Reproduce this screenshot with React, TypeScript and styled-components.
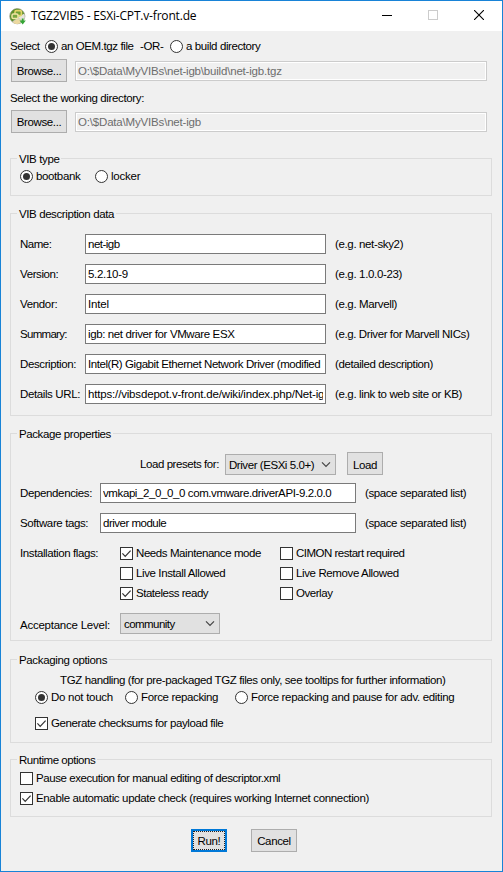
import React from 'react'
import styled, { createGlobalStyle } from 'styled-components'

const GlobalStyle = createGlobalStyle`
  * {
    box-sizing: border-box;
  }

  body {
    margin: 0;
    background: #f0f0f0;
    color: #000;
    font-family: 'Liberation Sans', Arial, sans-serif;
    font-size: 11.5px;
    line-height: 14px;
    letter-spacing: -0.36px;
  }

  button, input {
    font: inherit;
    color: inherit;
    letter-spacing: inherit;
  }
`

const Window = styled.div`
  display: flex;
  flex-direction: column;
  width: 503px;
  height: 872px;
  border: 1px solid #1883d7;
  background: #f0f0f0;
  overflow: hidden;
`

const TitleBar = styled.header`
  display: flex;
  align-items: center;
  height: 30px;
  padding-left: 8px;
  background: #fff;
`

const Title = styled.h1`
  flex: 1;
  margin: -2px 0 0 5px;
  font: 12px 'Open Sans', sans-serif;
  letter-spacing: -0.18px;
`

const WindowButton = styled.button<{ $disabled?: boolean }>`
  display: flex;
  align-items: center;
  justify-content: center;
  width: 46px;
  height: 30px;
  padding: 0 0 2px;
  border: 0;
  background: none;
  color: ${({ $disabled }) => ($disabled ? '#ccc' : '#000')};
`

const Content = styled.main`
  display: flex;
  flex-direction: column;
  padding: 8px 10px 0 9px;
`

const Text = styled.span<{ $ls?: number }>`
  white-space: nowrap;
  letter-spacing: ${({ $ls = -0.36 }) => $ls}px;
`

const SourceRow = styled.div`
  display: flex;
  align-items: center;
  height: 15px;
  margin-bottom: 5px;
`

const PathRow = styled.div`
  display: flex;
  align-items: center;
  gap: 8px;
  height: 23px;
  padding-left: 1px;
`

const DirectoryLabel = styled.div`
  margin: 9px 0 5px;
`

const PushButton = styled.button<{ $width: number; $default?: boolean }>`
  width: ${({ $width }) => $width}px;
  height: 23px;
  padding: 0;
  border: ${({ $default }) => ($default ? '2px solid #0078d7' : '1px solid #adadad')};
  background: #e1e1e1;
  outline: ${({ $default }) => ($default ? '1px dotted #222' : 'none')};
  outline-offset: -3px;
  white-space: nowrap;
`

const Field = styled.input<{ $width: number; $ls?: number }>`
  width: ${({ $width }) => $width}px;
  height: 20px;
  padding: 0 2px 1px;
  border: 1px solid #7a7a7a;
  border-radius: 0;
  background: #fff;
  letter-spacing: ${({ $ls = -0.36 }) => $ls}px;

  &:disabled {
    padding-bottom: 0;
    border-color: #ccc;
    box-shadow: inset 0 0 0 1px #fff;
    background: #f0f0f0;
    color: #6d6d6d;
  }
`

const Group = styled.section<{ $height: number; $gap: number }>`
  height: ${({ $height }) => $height}px;
  margin-top: ${({ $gap }) => $gap}px;
  padding-left: 9px;
  border: 1px solid #dcdcdc;
`

const Legend = styled.h2<{ $ls?: number }>`
  width: fit-content;
  height: 14px;
  margin: -7px 0 0 -3px;
  padding: 0 2px;
  background: #f0f0f0;
  font-size: inherit;
  font-weight: normal;
  white-space: nowrap;
  letter-spacing: ${({ $ls = -0.36 }) => $ls}px;
`

const OptionLabel = styled.label<{ $ls?: number; $width?: number }>`
  display: flex;
  align-items: center;
  gap: 3px;
  width: ${({ $width }) => ($width ? `${$width}px` : 'auto')};
  height: 13px;
  line-height: 13px;
  white-space: nowrap;
  letter-spacing: ${({ $ls = -0.36 }) => $ls}px;
`

const OptionRow = styled.div<{ $top: number; $left?: number }>`
  display: flex;
  margin-top: ${({ $top }) => $top}px;
  padding-left: ${({ $left = 0 }) => $left}px;
`

const FormRows = styled.div<{ $top: number }>`
  display: flex;
  flex-direction: column;
  gap: 10px;
  margin-top: ${({ $top }) => $top}px;
`

const FormRow = styled.div<{ $label: number }>`
  display: grid;
  grid-template-columns: ${({ $label }) => $label}px auto 1fr;
  align-items: center;
  height: 20px;
`

const Hint = styled(Text)`
  padding-left: 9px;
`

const PresetRow = styled.div`
  display: flex;
  height: 23px;
  margin-top: 11px;
  padding-left: 120px;
  line-height: 24px;
`

const PresetLabel = styled(Text)`
  width: 85px;
`

const Select = styled.div<{ $width: number; $ls?: number }>`
  display: flex;
  align-items: center;
  justify-content: space-between;
  width: ${({ $width }) => $width}px;
  height: 21px;
  padding: 0 4px 0 3px;
  border: 1px solid #adadad;
  background: #e1e1e1;
  line-height: 14px;
  white-space: nowrap;
  letter-spacing: ${({ $ls = -0.36 }) => $ls}px;
`

const PresetSelect = styled(Select)`
  margin: 2px 11px 0 0;
`

const FlagsRow = styled.div`
  display: grid;
  grid-template-columns: 100px 1fr;
  margin-top: 14px;
  line-height: 13px;
`

const Flags = styled.div`
  display: grid;
  grid-template-columns: 160px 1fr;
  row-gap: 7px;
`

const LevelRow = styled.div`
  display: flex;
  align-items: center;
  height: 21px;
  margin-top: 13px;
`

const LevelLabel = styled(Text)`
  width: 100px;
  padding-top: 2px;
`

const HandlingNote = styled(Text)`
  display: block;
  margin: 6px 0 0 40px;
`

const Actions = styled.footer`
  display: flex;
  gap: 24px;
  margin: 12px 0 0 181px;
`

const AppIcon = () => (
  <svg width="17" height="17" viewBox="0 0 17 17">
    <circle cx="8.3" cy="8.2" r="7.6" fill="#c9cbb9" stroke="#9a9d86" strokeWidth=".8" />
    <path d="M1 8A7.3 7.3 0 0 1 15.3 6L9.5 9.5 3 13.5A7 7 0 0 1 1 8z" fill="#5d8f2b" />
    <path d="M9 9l6-3.3a7.4 7.4 0 0 1-1 7.5z" fill="#e5e5dc" />
    <rect x="6" y="2.6" width="6.4" height="5" rx="1.4" fill="#6f9f35" stroke="#e3d56a" strokeWidth="1.6" />
    <rect x="3" y="6" width="6" height="4.6" rx="1.4" fill="#77a63e" stroke="#efe4a6" strokeWidth="1.5" />
    <path d="M4 14.4c2-2.6 4.5-3.4 8-3l-1 3.8c-2.3 1.2-5.3.8-7-.8z" fill="#ecd9a0" />
    <path d="M12.8 10.4h1.8v2h2.2l-3.1 4-3.2-4h2.3z" fill="#35a536" />
  </svg>
)

const Chevron = () => (
  <svg width="10" height="7" viewBox="0 0 10 7">
    <path d="M1 1.3l4 4 4-4" fill="none" stroke="#444" strokeWidth="1.2" />
  </svg>
)

const RadioMark = ({ checked }: { checked?: boolean }) => (
  <svg width="13" height="13" viewBox="0 0 13 13">
    <circle cx="6.5" cy="6.5" r="6" fill="#fff" stroke="#333" />
    {checked && <circle cx="6.5" cy="6.5" r="3.5" fill="#333" />}
  </svg>
)

const CheckMark = ({ checked }: { checked?: boolean }) => (
  <svg width="13" height="13" viewBox="0 0 13 13">
    <rect x=".5" y=".5" width="12" height="12" fill="#fff" stroke="#333" />
    {checked && <path d="M2.4 6.4l2.8 2.9 5.4-5.7" fill="none" stroke="#333" strokeWidth="1.2" />}
  </svg>
)

interface OptionProps {
  label: string
  checked?: boolean
  ls?: number
  width?: number
}

const Radio: React.FC<OptionProps> = ({ label, checked, ls, width }) => (
  <OptionLabel $ls={ls} $width={width}>
    <RadioMark checked={checked} />
    {label}
  </OptionLabel>
)

const Checkbox: React.FC<OptionProps> = ({ label, checked, ls, width }) => (
  <OptionLabel $ls={ls} $width={width}>
    <CheckMark checked={checked} />
    {label}
  </OptionLabel>
)

const description = [
  { label: 'Name:', ls: -0.5, value: 'net-igb', valueLs: -0.5, hint: '(e.g. net-sky2)', hintLs: -0.36 },
  { label: 'Version:', ls: -0.4, value: '5.2.10-9', valueLs: -0.3, hint: '(e.g. 1.0.0-23)', hintLs: -0.35 },
  { label: 'Vendor:', ls: -0.34, value: 'Intel', valueLs: -0.15, hint: '(e.g. Marvell)', hintLs: -0.36 },
  { label: 'Summary:', ls: -0.7, value: 'igb: net driver for VMware ESX', valueLs: -0.38, hint: '(e.g. Driver for Marvell NICs)', hintLs: -0.4 },
  { label: 'Description:', ls: -0.39, value: 'Intel(R) Gigabit Ethernet Network Driver (modified', valueLs: -0.43, hint: '(detailed description)', hintLs: -0.4 },
  { label: 'Details URL:', ls: -0.38, value: 'https://vibsdepot.v-front.de/wiki/index.php/Net-igb', valueLs: -0.17, hint: '(e.g. link to web site or KB)', hintLs: -0.36 },
]

const flags = [
  { label: 'Needs Maintenance mode', ls: -0.42, checked: true },
  { label: 'CIMON restart required', ls: -0.5 },
  { label: 'Live Install Allowed', ls: -0.39 },
  { label: 'Live Remove Allowed', ls: -0.38 },
  { label: 'Stateless ready', ls: -0.48, checked: true },
  { label: 'Overlay', ls: -0.45 },
]

const App: React.FC = () => (
  <>
    <GlobalStyle />
    <Window>
      <TitleBar>
        <AppIcon />
        <Title>TGZ2VIB5 - ESXi-CPT.v-front.de</Title>
        <WindowButton aria-label="Minimize">
          <svg width="10" height="10"><path d="M0 5.5h10" stroke="currentColor" /></svg>
        </WindowButton>
        <WindowButton aria-label="Maximize" $disabled>
          <svg width="10" height="10"><rect x=".5" y=".5" width="9" height="9" fill="none" stroke="currentColor" /></svg>
        </WindowButton>
        <WindowButton aria-label="Close">
          <svg width="10" height="10"><path d="M0 0l10 10M10 0L0 10" stroke="currentColor" strokeWidth="1.1" /></svg>
        </WindowButton>
      </TitleBar>
      <Content>
        <SourceRow>
          <OptionLabel $width={35} $ls={-0.4}>Select</OptionLabel>
          <Radio label="an OEM.tgz file" checked width={95} ls={-0.4} />
          <OptionLabel $width={30} $ls={-0.35}>-OR-</OptionLabel>
          <Radio label="a build directory" ls={-0.4} />
        </SourceRow>
        <PathRow>
          <PushButton $width={56}>Browse...</PushButton>
          <Field $width={412} $ls={-0.19} disabled defaultValue="O:\$Data\MyVIBs\net-igb\build\net-igb.tgz" />
        </PathRow>
        <DirectoryLabel>
          <Text $ls={-0.36}>Select the working directory:</Text>
        </DirectoryLabel>
        <PathRow>
          <PushButton $width={56}>Browse...</PushButton>
          <Field $width={412} $ls={-0.18} disabled defaultValue="O:\$Data\MyVIBs\net-igb" />
        </PathRow>

        <Group $height={38} $gap={25}>
          <Legend $ls={-0.38}>VIB type</Legend>
          <OptionRow $top={4}>
            <Radio label="bootbank" checked width={75} ls={-0.38} />
            <Radio label="locker" ls={-0.22} />
          </OptionRow>
        </Group>

        <Group $height={203} $gap={17}>
          <Legend $ls={-0.4}>VIB description data</Legend>
          <FormRows $top={13}>
            {description.map((row) => (
              <FormRow key={row.label} $label={65}>
                <Text $ls={row.ls}>{row.label}</Text>
                <Field $width={241} $ls={row.valueLs} defaultValue={row.value} />
                <Hint $ls={row.hintLs}>{row.hint}</Hint>
              </FormRow>
            ))}
          </FormRows>
        </Group>

        <Group $height={208} $gap={17}>
          <Legend $ls={-0.4}>Package properties</Legend>
          <PresetRow>
            <PresetLabel $ls={-0.43}>Load presets for:</PresetLabel>
            <PresetSelect $width={111} $ls={-0.44}>
              Driver (ESXi 5.0+)
              <Chevron />
            </PresetSelect>
            <PushButton $width={36}>Load</PushButton>
          </PresetRow>
          <FormRows $top={8}>
            <FormRow $label={80}>
              <Text>Dependencies:</Text>
              <Field $width={256} $ls={-0.4} defaultValue="vmkapi_2_0_0_0 com.vmware.driverAPI-9.2.0.0" />
              <Hint $ls={-0.4}>(space separated list)</Hint>
            </FormRow>
            <FormRow $label={80}>
              <Text $ls={-0.38}>Software tags:</Text>
              <Field $width={256} $ls={-0.5} defaultValue="driver module" />
              <Hint $ls={-0.4}>(space separated list)</Hint>
            </FormRow>
          </FormRows>
          <FlagsRow>
            <Text $ls={-0.4}>Installation flags:</Text>
            <Flags>
              {flags.map((flag) => (
                <Checkbox key={flag.label} {...flag} />
              ))}
            </Flags>
          </FlagsRow>
          <LevelRow>
            <LevelLabel $ls={-0.24}>Acceptance Level:</LevelLabel>
            <Select $width={100} $ls={-0.55}>
              community
              <Chevron />
            </Select>
          </LevelRow>
        </Group>

        <Group $height={84} $gap={18}>
          <Legend $ls={-0.35}>Packaging options</Legend>
          <HandlingNote $ls={-0.39}>
            TGZ handling (for pre-packaged TGZ files only, see tooltips for further information)
          </HandlingNote>
          <OptionRow $top={4} $left={15}>
            <Radio label="Do not touch" checked width={90} ls={-0.27} />
            <Radio label="Force repacking" width={110} />
            <Radio label="Force repacking and pause for adv. editing" ls={-0.33} />
          </OptionRow>
          <OptionRow $top={13} $left={15}>
            <Checkbox label="Generate checksums for payload file" checked ls={-0.41} />
          </OptionRow>
        </Group>

        <Group $height={58} $gap={16}>
          <Legend $ls={-0.46}>Runtime options</Legend>
          <OptionRow $top={5}>
            <Checkbox label="Pause execution for manual editing of descriptor.xml" ls={-0.43} />
          </OptionRow>
          <OptionRow $top={7}>
            <Checkbox label="Enable automatic update check (requires working Internet connection)" checked ls={-0.35} />
          </OptionRow>
        </Group>

        <Actions>
          <PushButton $width={36} $default>Run!</PushButton>
          <PushButton $width={46}>Cancel</PushButton>
        </Actions>
      </Content>
    </Window>
  </>
)

export default App
